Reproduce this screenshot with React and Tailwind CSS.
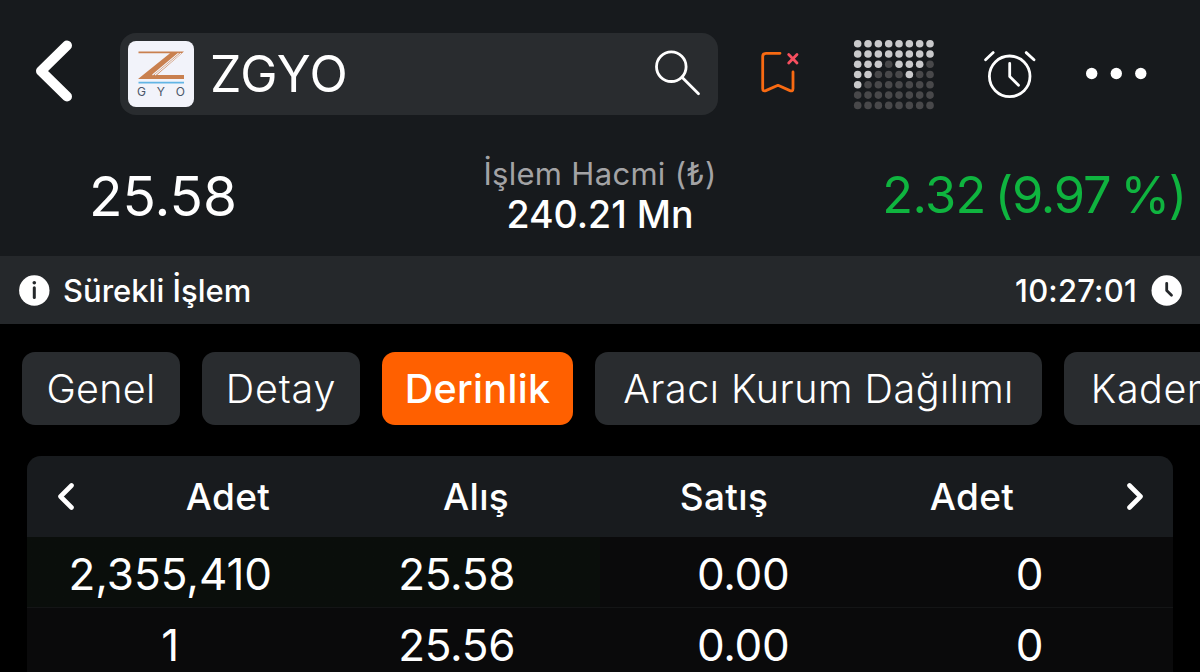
const TABS = [
  { label: 'Genel', width: 'w-[158px]', text: 'tracking-[0.3px]' },
  { label: 'Detay', width: 'w-[158px]', text: 'tracking-[0.8px]' },
  { label: 'Derinlik', width: 'w-[191px]', text: 'tracking-[0.3px]' },
  { label: 'Aracı Kurum Dağılımı', width: 'w-[447px]', text: 'tracking-[0.5px]' },
  { label: 'Kademe', width: 'w-[208px]', text: 'tracking-[0.5px]' },
]

const ROWS = [
  { bidQty: '2,355,410', bid: '25.58', ask: '0.00', askQty: '0', fill: 50 },
  { bidQty: '1', bid: '25.56', ask: '0.00', askQty: '0', fill: 0 },
]

const DOTS = [
  '11111111',
  '11111111',
  '11101110',
  '11000100',
  '10000000',
  '00000000',
  '00000000',
]

export default function App() {
  return (
    <div className="flex h-[672px] w-[1200px] flex-col overflow-hidden bg-black font-['Inter',sans-serif] text-white">
      <Header />
      <StatusBar />
      <Tabs active="Derinlik" />
      <DepthTable />
    </div>
  )
}

function Header() {
  return (
    <header className="h-[256px] shrink-0 bg-[#171a1d] pt-[33px]">
      <div className="flex h-[82px] items-center">
        <button type="button" aria-label="Geri" className="ml-[30px]">
          <BackIcon />
        </button>
        <div className="ml-[42px] flex h-[82px] w-[598px] items-center rounded-2xl bg-[#292c2f] pl-2 pr-[14px]">
          <Logo />
          <span className="ml-[16px] text-[50px] leading-none tracking-[0.4px]">ZGYO</span>
          <SearchIcon />
        </div>
        <BookmarkIcon />
        <DotMatrix />
        <AlarmIcon />
        <MoreIcon />
      </div>

      <div className="flex h-[141px] pt-[39px]">
        <div className="flex h-[84px] w-[326px] items-center justify-center text-[55px] leading-none">
          25.58
        </div>
        <div className="flex w-[548px] flex-col items-center">
          <span className="text-[31px] leading-[40px] tracking-[0.3px] text-[#a3a3a5]">
            İşlem Hacmi (₺)
          </span>
          <span className="pt-px text-[37.5px] leading-[40px] font-medium">240.21 Mn</span>
        </div>
        <div className="flex h-[82px] w-[326px] items-center justify-end gap-[9px] pr-[14px] text-[50.5px] leading-none font-[380] whitespace-nowrap text-[#0fb43f]">
          <span className="tracking-[-0.6px]">2.32</span>
          <span className="tracking-[-1.2px] [word-spacing:-3px]">(9.97 %)</span>
        </div>
      </div>
    </header>
  )
}

function StatusBar() {
  return (
    <div className="flex h-[68px] shrink-0 items-center bg-[#25282b] pr-[18px] pl-[19px] text-[31px] font-medium">
      <InfoIcon />
      <span className="ml-[13px] pt-[2px]">Sürekli İşlem</span>
      <span className="mr-[14px] ml-auto pt-[2px] tracking-[0.2px]">10:27:01</span>
      <ClockIcon />
    </div>
  )
}

function Tabs({ active }) {
  return (
    <nav className="flex shrink-0 gap-[22px] overflow-hidden pt-7 pl-[22px]">
      {TABS.map((tab) => (
        <button
          key={tab.label}
          type="button"
          className={`flex h-[73px] shrink-0 items-center justify-center rounded-[13px] pt-[2px] text-[39.5px] leading-none whitespace-nowrap ${tab.width} ${tab.text} ${
            tab.label === active ? 'bg-[#ff6000] font-[550]' : 'bg-[#292c2f] font-light'
          }`}
        >
          {tab.label}
        </button>
      ))}
    </nav>
  )
}

function DepthTable() {
  return (
    <section className="mx-[27px] mt-[31px] overflow-hidden rounded-t-[14px] bg-[#0a0a0b]">
      <div className="flex h-[81px] items-center bg-[#181b1e] text-[37px] font-medium">
        <div className="flex w-[77px] justify-center">
          <SmallChevron d="M14.5 3.5 L3.5 14.5 L14.5 25.5" />
        </div>
        <div className="grid flex-1 grid-cols-4 text-center tracking-[0.3px]">
          <span>Adet</span>
          <span>Alış</span>
          <span>Satış</span>
          <span>Adet</span>
        </div>
        <div className="flex w-[77px] justify-center">
          <SmallChevron d="M3.5 3.5 L14.5 14.5 L3.5 25.5" />
        </div>
      </div>
      {ROWS.map((row) => (
        <DepthRow key={row.bid} row={row} />
      ))}
    </section>
  )
}

function DepthRow({ row }) {
  return (
    <div
      className="grid h-[71px] grid-cols-4 items-center border-b border-[#141516] bg-linear-to-r from-[#0a0e0b] to-[#0a0e0b] bg-no-repeat pt-[3px] text-center text-[44px] leading-none"
      style={{ backgroundSize: `${row.fill}% 100%` }}
    >
      <span>{row.bidQty}</span>
      <span className="tracking-[-0.3px]">{row.bid}</span>
      <span className="tracking-[-0.3px]">{row.ask}</span>
      <span>{row.askQty}</span>
    </div>
  )
}

function BackIcon() {
  return (
    <svg width="48" height="82" viewBox="0 0 48 82" fill="none" stroke="currentColor" strokeWidth="10" strokeLinecap="round" strokeLinejoin="round">
      <path d="M37 12.5 L11 38 L37 63.5" />
    </svg>
  )
}

function Logo() {
  return (
    <div className="flex h-[66px] w-[66px] flex-col items-center rounded-lg bg-[#f2f3fa] pt-[10px]">
      <svg width="48" height="34" viewBox="0 0 48 34">
        <path fill="#c9804f" d="M1.5 0.5 H47 L20 24 H47 V28 H1 L33 2.2 H1.5 Z" />
        <path stroke="#f2f3fa" strokeWidth="1.1" d="M41.5 2.2 L15.5 24 M44 2.2 L18 24" />
        <path stroke="#62b5e5" strokeWidth="1.8" d="M1.5 31.7 H47" />
      </svg>
      <div className="-mt-px flex w-[48px] justify-between text-[12px] leading-[15px] text-[#4a5568]">
        <span>G</span>
        <span>Y</span>
        <span>O</span>
      </div>
    </div>
  )
}

function SearchIcon() {
  return (
    <svg className="ml-auto" width="54" height="82" viewBox="0 0 54 82" fill="none" stroke="currentColor" strokeWidth="2.8" strokeLinecap="round">
      <circle cx="21.3" cy="33.7" r="14.8" />
      <path d="M32 44.3 L48.5 60.8" />
    </svg>
  )
}

function BookmarkIcon() {
  return (
    <svg className="ml-[38px]" width="48" height="82" viewBox="0 0 48 82" fill="none" strokeWidth="2.8" strokeLinecap="round" strokeLinejoin="round">
      <path
        stroke="#f86a12"
        d="M24 20.3 H10 Q6.7 20.3 6.7 23.6 V55.5 Q6.7 58.8 9.8 57.6 L22 52.3 L34 57.6 Q37 58.8 37 55.5 V39"
      />
      <path stroke="#f64f5f" d="M32.7 21.5 L41 30 M41 21.5 L32.7 30" />
    </svg>
  )
}

function DotMatrix() {
  return (
    <svg className="ml-[46px]" width="90" height="82" viewBox="0 0 90 82">
      {DOTS.map((line, y) =>
        line.split('').map((on, x) => (
          <circle
            key={`${x}-${y}`}
            cx={7.7 + x * 10.33}
            cy={10.7 + y * 10.28}
            r="3.8"
            fill={on === '1' ? '#c9c9cb' : '#48484a'}
          />
        )),
      )}
    </svg>
  )
}

function AlarmIcon() {
  return (
    <svg className="ml-[40px]" width="60" height="82" viewBox="0 0 60 82" fill="none" stroke="currentColor" strokeWidth="2.8" strokeLinecap="round" strokeLinejoin="round">
      <circle cx="29.7" cy="43.3" r="20.3" />
      <path d="M29.7 30.5 V43.5 L38.5 52.2" />
      <path d="M5.6 26.8 L13.2 19.6 M46.2 19.6 L54 26.8" />
    </svg>
  )
}

function MoreIcon() {
  return (
    <svg className="ml-[40px]" width="72" height="82" viewBox="0 0 72 82" fill="currentColor">
      <circle cx="11.7" cy="40.5" r="5.7" />
      <circle cx="36.3" cy="40.5" r="5.7" />
      <circle cx="60.8" cy="40.5" r="5.7" />
    </svg>
  )
}

function InfoIcon() {
  return (
    <svg width="31" height="31" viewBox="0 0 31 31">
      <circle cx="15.3" cy="15.5" r="15.2" fill="#fff" />
      <circle cx="15.3" cy="7.8" r="1.8" fill="#25282b" />
      <path d="M15.3 12.7 V22.5" stroke="#25282b" strokeWidth="3" strokeLinecap="round" />
    </svg>
  )
}

function ClockIcon() {
  return (
    <svg width="31" height="31" viewBox="0 0 31 31" fill="none">
      <circle cx="15.7" cy="15.5" r="15.2" fill="#fff" />
      <path d="M15.7 8.3 V15.5 L20.5 20.3" stroke="#25282b" strokeWidth="2.8" strokeLinecap="round" strokeLinejoin="round" />
    </svg>
  )
}

function SmallChevron({ d }) {
  return (
    <svg width="18" height="29" viewBox="0 0 18 29" fill="none" stroke="currentColor" strokeWidth="4.6" strokeLinecap="round" strokeLinejoin="round">
      <path d={d} />
    </svg>
  )
}
